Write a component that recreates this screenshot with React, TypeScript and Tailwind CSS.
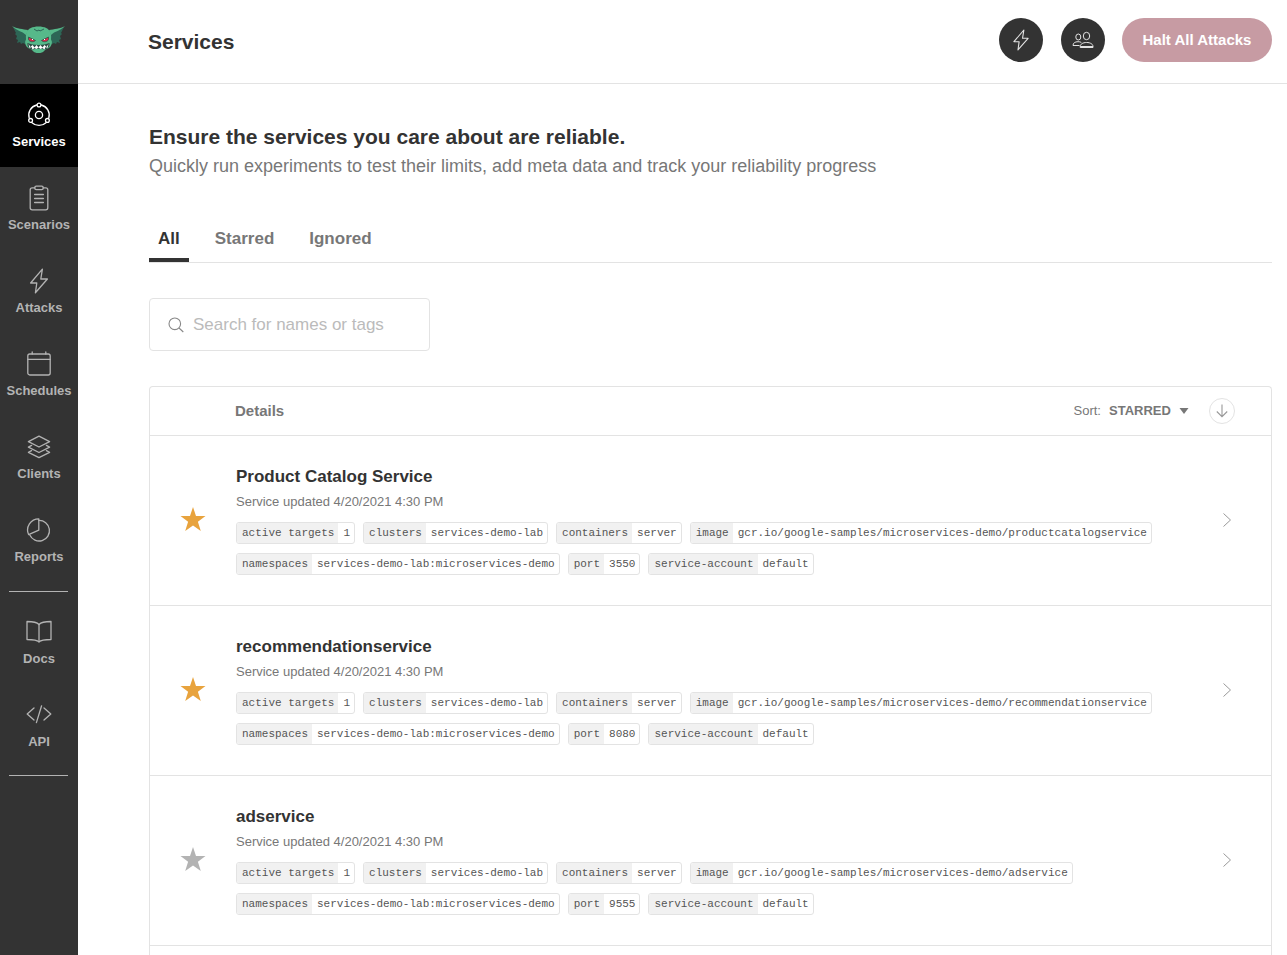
import type { ReactNode } from "react";

const icons: Record<string, ReactNode> = {
  services: (
    <>
      <circle cx="13" cy="13" r="3.6" />
      <path d="M15.3 3a10.4 10.4 0 0 1 7.5 13M20 20.7a10.4 10.4 0 0 1-14 0M3.2 16A10.4 10.4 0 0 1 10.7 3" />
      <circle cx="13" cy="3" r="1.9" />
      <circle cx="4.6" cy="18.4" r="1.9" />
      <circle cx="21.4" cy="18.4" r="1.9" />
    </>
  ),
  scenarios: (
    <>
      <path d="M8.8 2.8H6.2a2 2 0 0 0-2 2v18a2 2 0 0 0 2 2h13.6a2 2 0 0 0 2-2v-18a2 2 0 0 0-2-2h-2.6" />
      <rect x="8.8" y="1.2" width="8.4" height="3.4" rx="1.4" />
      <path d="M8.6 9.5h8.8M8.6 13.5h8.8M8.6 17.5h8.8" />
    </>
  ),
  attacks: <path d="M16.4 1.2 4.6 15h6.2L9.4 24.8 21.4 11h-6.6z" />,
  schedules: (
    <>
      <rect x="1.8" y="3" width="22.4" height="21" rx="2" />
      <path d="M1.8 8.4h22.4M6.2 1v2M19.8 1v2" />
    </>
  ),
  clients: (
    <>
      <path d="M13 2.2 2.4 7.6 13 13l10.6-5.4z" />
      <path d="m5.6 11.4-3.2 1.7L13 18.5l10.6-5.4-3.2-1.7" />
      <path d="m5.6 16.6-3.2 1.7L13 23.7l10.6-5.4-3.2-1.7" />
    </>
  ),
  reports: (
    <>
      <path d="M12.8 13.2V1.8A11.2 11.2 0 0 0 2.6 17.6z" />
      <path d="M12.8 3.4a10.3 10.3 0 1 1-9 14.6" />
    </>
  ),
  docs: (
    <>
      <path d="M13 5.5C11 3.3 6 2.5 1 2.5v18c5 0 10 .4 12 2.4 2-2 7-2.4 12-2.4v-18c-5 0-10 .8-12 3z" />
      <path d="M13 5.5v17.4" />
    </>
  ),
  api: <path d="M8 6 1.2 12 8 18M18 6l6.8 6L18 18M15.6 3.8l-5.2 16.8" />,
};

const mainNav = [
  { icon: "services", label: "Services" },
  { icon: "scenarios", label: "Scenarios" },
  { icon: "attacks", label: "Attacks" },
  { icon: "schedules", label: "Schedules" },
  { icon: "clients", label: "Clients" },
  { icon: "reports", label: "Reports" },
];

const helpNav = [
  { icon: "docs", label: "Docs" },
  { icon: "api", label: "API" },
];

const tabs = ["All", "Starred", "Ignored"];

const services = [
  { name: "Product Catalog Service", image: "productcatalogservice", port: "3550", starred: true },
  { name: "recommendationservice", image: "recommendationservice", port: "8080", starred: true },
  { name: "adservice", image: "adservice", port: "9555", starred: false },
];

function Icon({ name, className }: { name: string; className: string }) {
  return (
    <svg
      viewBox="0 0 26 26"
      className={className}
      fill="none"
      stroke="currentColor"
      strokeWidth="1.3"
      strokeLinejoin="round"
      strokeLinecap="round"
      aria-hidden="true"
    >
      {icons[name]}
    </svg>
  );
}

function Logo() {
  return (
    <svg viewBox="0 0 54 28" className="h-7 w-[54px]" aria-hidden="true">
      {/* Ears */}
      <path d="M1 1c4 3 9 3 14 4v12l-2 1-2-1-2 1-1-2-3 1 1-3-2-1 1-3-2-2 1-1z" fill="#2d6656" />
      <path d="M52 1c-4 3-9 3-14 4v12l2 1 2-1 2 1 1-2 3 1-1-3 2-1-1-3 2-2-1-1z" fill="#2d6656" />
      <path d="M0 0c5 3 11 3 16 4l-2 5C10 5 5 5 0 0zM53 0c-5 3-11 3-16 4l2 5c4-4 9-4 14-9z" fill="#56b98a" />
      {/* Head */}
      <path
        d="M26.5 0.5c-6 0-10.5 2-12 6-1 2.500-.5 5-.5 7-1.500 2-1 5 .5 7 2 2.500 4.500 2 6.500 4.500 1 1.500 3 2 5.500 2s4.500-.5 5.500-2c2-2.500 4.500-2 6.500-4.500 1.500-2 2-5 .5-7 0-2 .5-4.500-.5-7-1.500-4-6-6-12-6z"
        fill="#56b98a"
      />
      <path d="m22 3 3 2 2-1 1 1 4-2" stroke="#2d6656" fill="none" />
      {/* Eyes */}
      <path d="m16.5 11 7 3.5c-2 2-6 1.5-7-1zM36.5 11l-7 3.5c2 2 6 1.5 7-1z" fill="#d6294b" stroke="#2d5548" strokeWidth=".8" />
      <path d="M20 13h1v1h-1zM32 13h1v1h-1z" fill="#fff" />
      {/* Mouth */}
      <path d="M15.5 17c6 2.5 16 2.5 22 0 .5 4-2 6-5 6.500-3-1-9-1-12 0-3-.5-5.500-2.500-5-6.500z" fill="#2d4f45" />
      <path
        d="m16.5 18 2 3 2-2 2 2.500 2-2.500 2 2.500 2-2.500 2 2.500 2-2.500 2 2 2-3-1 4-2-1-1 2.500-2-1.500-2 1-2-1.500-2 1.500-2-1-2 1.500-1-2.500-2 1z"
        fill="#fff"
      />
    </svg>
  );
}

function NavItem({ icon, label, active }: { icon: string; label: string; active?: boolean }) {
  return (
    <a
      href={`#${icon}`}
      className={
        active
          ? "flex h-[83px] flex-col items-center gap-[5px] bg-black pt-[18px] text-white"
          : "flex h-[83px] flex-col items-center gap-[5px] pt-[18px] text-[#b3b3b3]"
      }
    >
      <Icon name={icon} className="size-[26px]" />
      <span className="text-[13px] leading-[18px] font-bold">{label}</span>
    </a>
  );
}

function Sidebar() {
  return (
    <aside className="w-[78px] shrink-0 bg-[#333]">
      <a href="#home" aria-label="Home" className="flex h-[84px] items-center justify-center pb-1">
        <Logo />
      </a>
      <nav>
        {mainNav.map((item) => (
          <NavItem key={item.icon} {...item} active={item.icon === "services"} />
        ))}
        <hr className="my-[9px] mr-2.5 ml-[9px] border-[#b3b3b3]" />
        {helpNav.map((item) => (
          <NavItem key={item.icon} {...item} />
        ))}
        <hr className="my-2 mr-2.5 ml-[9px] border-[#b3b3b3]" />
      </nav>
    </aside>
  );
}

function Header() {
  return (
    <header className="flex h-[84px] items-center border-b border-[#e3e3e3] pr-[15px] pb-[3px] pl-[70px]">
      <h1 className="flex-1 pt-[3px] text-[21px] font-bold">Services</h1>
      <button aria-label="Attacks" className="mr-[18px] flex size-11 items-center justify-center rounded-full bg-[#333] text-[#e3e3e3]">
        <Icon name="attacks" className="size-[22px]" />
      </button>
      <button aria-label="Team" className="mr-[17px] flex size-11 items-center justify-center rounded-full bg-[#333] text-[#e3e3e3]">
        <svg viewBox="0 0 22 18" className="h-[18px] w-[22px]" fill="none" stroke="currentColor" strokeLinejoin="round" aria-hidden="true">
          <ellipse cx="14.5" cy="5" rx="3.2" ry="3.7" />
          <ellipse cx="6.3" cy="6" rx="2.5" ry="3" />
          <path d="M8.2 16.5v-1c0-2.3 2.5-4 6.4-4s6.4 1.7 6.4 4v1zM8.2 15.5H21" />
          <path d="M7.5 14.5H1c0-2.5 2-3.8 5-3.8 1.300 0 2.400.2 3.300.7" />
        </svg>
      </button>
      <button className="h-11 w-[150px] rounded-full bg-[#c79ba3] text-[15px] font-bold text-white">Halt All Attacks</button>
    </header>
  );
}

function Tag({ label, value }: { label: string; value: string }) {
  return (
    <li className="flex h-[22px] overflow-hidden rounded-[3px] border border-[#e3e3e3] font-['Liberation_Mono',monospace] text-[11px] leading-5 text-[#555]">
      <span className="bg-[#f1f1f1] pr-1 pl-[5px]">{label}</span>
      <span className="pr-1 pl-[5px]">{value}</span>
    </li>
  );
}

function ServiceRow({ name, image, port, starred }: (typeof services)[number]) {
  return (
    <li className="flex items-center border-b border-[#e3e3e3] pt-7 pb-[30px]">
      <button aria-label={starred ? `Unstar ${name}` : `Star ${name}`} aria-pressed={starred} className="ml-[30px] shrink-0">
        <svg viewBox="0 0 26 25" className={starred ? "h-[25px] w-[26px] text-[#e8a33d]" : "h-[25px] w-[26px] text-[#b3b3b3]"} aria-hidden="true">
          <path d="m13 0 3 9h9.500l-7.600 5.700 2.900 9.300-7.800-5.600L5.200 24l2.900-9.300L.5 9H10z" fill="currentColor" />
        </svg>
      </button>
      <div className="ml-[30px] min-w-0 flex-1">
        <h3 className="text-[17px] leading-[26px] font-bold">{name}</h3>
        <p className="text-[13px] leading-6 text-[#777]">Service updated 4/20/2021 4:30 PM</p>
        <ul className="mt-2 flex flex-wrap gap-x-2 gap-y-[9px]">
          <Tag label="active targets" value="1" />
          <Tag label="clusters" value="services-demo-lab" />
          <Tag label="containers" value="server" />
          <Tag label="image" value={`gcr.io/google-samples/microservices-demo/${image}`} />
          <Tag label="namespaces" value="services-demo-lab:microservices-demo" />
          <Tag label="port" value={port} />
          <Tag label="service-account" value="default" />
        </ul>
      </div>
      <a href={`#${image}`} aria-label={`Open ${name}`} className="mr-[39px] shrink-0">
        <svg viewBox="0 0 10 16" className="h-4 w-2.5" fill="none" stroke="#999" aria-hidden="true">
          <path d="m1.5 1.5 7 6.5-7 6.5" />
        </svg>
      </a>
    </li>
  );
}

export default function App() {
  return (
    <div className="flex h-screen overflow-hidden bg-white font-['Liberation_Sans',Arial,sans-serif] text-[#333]">
      <Sidebar />
      <div className="min-w-0 flex-1">
        <Header />
        <main className="pt-[38px] pr-[15px] pl-[71px]">
          <h2 className="text-[21px] leading-[30px] font-bold">Ensure the services you care about are reliable.</h2>
          <p className="text-[18px] leading-7 text-[#777]">
            Quickly run experiments to test their limits, add meta data and track your reliability progress
          </p>

          <div role="tablist" className="mt-9 flex gap-[17px] border-b border-[#e3e3e3]">
            {tabs.map((tab, i) => (
              <button
                key={tab}
                role="tab"
                aria-selected={i === 0}
                className={
                  i === 0
                    ? "h-[46px] border-b-4 border-[#333] px-[9px] pt-1 text-[17px] font-bold"
                    : "h-[46px] border-b-4 border-transparent px-[9px] pt-1 text-[17px] font-bold text-[#777]"
                }
              >
                {tab}
              </button>
            ))}
          </div>

          <label className="mt-[35px] flex h-[53px] w-[281px] items-center gap-[9px] rounded border border-[#e3e3e3] px-[18px]">
            <svg viewBox="0 0 16 16" className="size-4 shrink-0" fill="none" stroke="#888" strokeWidth="1.1" aria-hidden="true">
              <circle cx="6.8" cy="6.8" r="5.8" />
              <path d="m11 11 4.3 4" />
            </svg>
            <input
              type="search"
              aria-label="Search services"
              placeholder="Search for names or tags"
              className="w-full min-w-0 text-[17px] outline-none placeholder:text-[#bbb]"
            />
          </label>

          <section className="mt-[35px] rounded-t border border-b-0 border-[#e3e3e3]">
            <div className="flex h-[49px] items-center border-b border-[#e3e3e3] pr-9 pl-[85px] text-[#777]">
              <h3 className="flex-1 text-[15px] font-bold">Details</h3>
              <label htmlFor="sort" className="mr-2 text-[13px]">
                Sort:
              </label>
              <select id="sort" className="appearance-none text-[13px] font-bold">
                <option>STARRED</option>
                <option>NAME</option>
              </select>
              <svg viewBox="0 0 10 6" className="ml-2 h-1.5 w-2.5" fill="#777" aria-hidden="true">
                <path d="M.5 0h9L5 6z" />
              </svg>
              <button aria-label="Sort descending" className="ml-5 flex size-[26px] items-center justify-center rounded-full border border-[#e3e3e3]">
                <svg viewBox="0 0 12 14" className="h-3.5 w-3" fill="none" stroke="#999" strokeWidth="1.1" aria-hidden="true">
                  <path d="M6 .5v12M.8 7.500 6 12.700l5.200-5.200" />
                </svg>
              </button>
            </div>
            <ul>
              {services.map((service) => (
                <ServiceRow key={service.name} {...service} />
              ))}
            </ul>
            <div className="h-12" />
          </section>
        </main>
      </div>
    </div>
  );
}
